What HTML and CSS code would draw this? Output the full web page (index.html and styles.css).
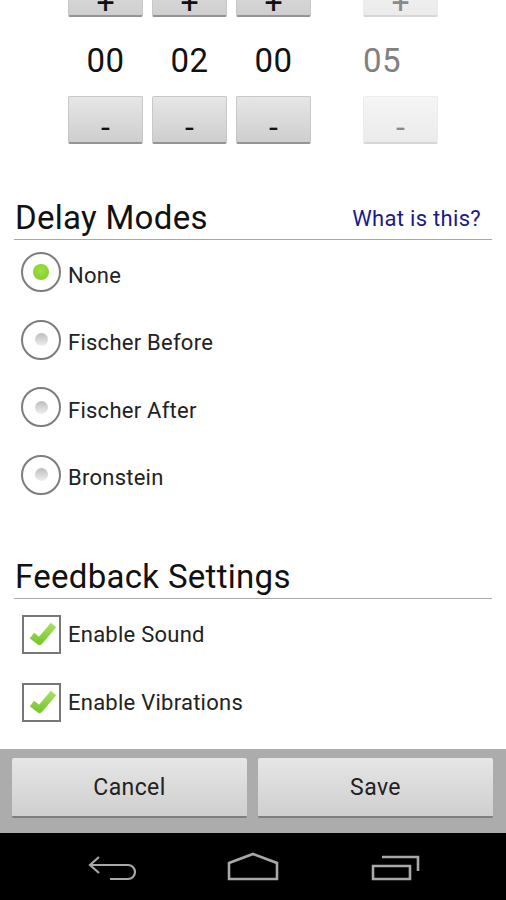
FILE: index.html
```html
<!DOCTYPE html>
<html>
<head>
    <meta charset="UTF-8">
    <title>Settings</title>
    <link rel="stylesheet" href="styles.css">
</head>
<body>
<div class="app">
    <div class="content">
        <div class="time-grid">
            <div class="time-col">
                <button type="button" class="step plus">+</button>
                <div class="digits">00</div>
                <button type="button" class="step minus">-</button>
            </div>
            <div class="time-col">
                <button type="button" class="step plus">+</button>
                <div class="digits">02</div>
                <button type="button" class="step minus">-</button>
            </div>
            <div class="time-col">
                <button type="button" class="step plus">+</button>
                <div class="digits">00</div>
                <button type="button" class="step minus">-</button>
            </div>
            <div class="time-col disabled">
                <button type="button" class="step plus">+</button>
                <div class="digits">05</div>
                <button type="button" class="step minus">-</button>
            </div>
        </div>

        <div class="section-head delay-head">
            <h2>Delay Modes</h2>
            <a class="help">What is this?</a>
        </div>
        <div class="options radios">
            <div class="option"><span class="radio checked"></span><span class="label">None</span></div>
            <div class="option"><span class="radio"></span><span class="label">Fischer Before</span></div>
            <div class="option"><span class="radio"></span><span class="label">Fischer After</span></div>
            <div class="option"><span class="radio"></span><span class="label">Bronstein</span></div>
        </div>

        <div class="section-head feedback-head">
            <h2>Feedback Settings</h2>
        </div>
        <div class="options checks">
            <div class="option">
                <span class="checkbox">
                    <svg viewBox="0 0 39 39" width="39" height="39">
                        <defs>
                            <linearGradient id="checkGreen" x1="0" y1="0" x2="0" y2="1">
                                <stop offset="0" stop-color="#a6dd62"/>
                                <stop offset="1" stop-color="#7cc932"/>
                            </linearGradient>
                        </defs>
                        <path d="M10 20.5 L17.5 26.5 L31.5 10" fill="none" stroke="url(#checkGreen)" stroke-width="7" stroke-linejoin="round"/>
                    </svg>
                </span>
                <span class="label">Enable Sound</span>
            </div>
            <div class="option">
                <span class="checkbox">
                    <svg viewBox="0 0 39 39" width="39" height="39">
                        <path d="M10 20.5 L17.5 26.5 L31.5 10" fill="none" stroke="url(#checkGreen)" stroke-width="7" stroke-linejoin="round"/>
                    </svg>
                </span>
                <span class="label">Enable Vibrations</span>
            </div>
        </div>
    </div>

    <div class="footer">
        <button type="button" class="footer-btn">Cancel</button>
        <button type="button" class="footer-btn">Save</button>
    </div>

    <div class="navbar">
        <svg viewBox="0 0 60 40" width="60" height="40"><path d="M17 11 L8 19 L17 27 M8 19 H46 A7 7 0 0 1 46 33 H28" fill="none" stroke="#a8a8a8" stroke-width="2.2"/></svg>
        <svg viewBox="0 0 60 40" width="60" height="40"><path d="M6 17 L30 8 L54 17 V33 H6 Z" fill="none" stroke="#a8a8a8" stroke-width="2.6"/></svg>
        <svg viewBox="0 0 60 40" width="60" height="40"><path d="M8 20 H45 V33 H8 Z M17 11 H53 V25" fill="none" stroke="#a8a8a8" stroke-width="2.6"/></svg>
    </div>
</div>
</body>
</html>
```

FILE: styles.css
```css
* {
    box-sizing: border-box;
}
html, body {
    margin: 0;
    padding: 0;
}
body {
    font-family: Roboto, "Liberation Sans", sans-serif;
    background-color: #fff;
    color: #111;
}
.app {
    width: 506px;
    height: 900px;
    display: flex;
    flex-direction: column;
    overflow: hidden;
}
.content {
    height: 749px;
    padding: 0 14px;
    overflow: hidden;
}

/* time pickers, the top of the list is scrolled off screen */
.time-grid {
    display: grid;
    grid-template-columns: repeat(3, 75px) 75px;
    column-gap: 9px;
    margin-top: -31px;
    padding-left: 54px;
}
.time-col:last-child {
    margin-left: 43px;
}
.step {
    display: block;
    width: 75px;
    height: 48px;
    padding: 0;
    border: 1px solid #c8c8c8;
    border-bottom: 2px solid #949494;
    border-radius: 2px;
    background: linear-gradient(#e6e6e6, #cecece);
    color: #111;
    font-family: Roboto, sans-serif;
    font-size: 32px;
    font-weight: 400;
    line-height: 1;
}
.step.plus {
    padding-top: 16px;
}
.step.minus {
    padding-top: 14px;
}
.digits {
    height: 79px;
    line-height: 88px;
    text-align: center;
    font-size: 33px;
    letter-spacing: 0.5px;
    color: #111;
}
.disabled .step {
    background: linear-gradient(#f5f5f5, #ebebeb);
    border-color: #ececec;
    border-bottom-color: #d6d6d6;
    color: #8a8a8a;
}
.disabled .digits {
    color: #808080;
}

.section-head {
    display: flex;
    justify-content: space-between;
    align-items: baseline;
    height: 44px;
    border-bottom: 1px solid #a8a8a8;
}
.section-head h2 {
    margin: 0 0 0 1px;
    font-size: 33px;
    font-weight: 400;
    letter-spacing: 0.3px;
    line-height: 43px;
    color: #111;
}
.delay-head {
    margin-top: 52px;
}
.feedback-head {
    margin-top: 60px;
}
.help {
    margin-right: 11px;
    font-size: 22px;
    letter-spacing: 0.3px;
    color: #1a1a8a;
    position: relative;
    top: -3px;
}

.options {
    display: flex;
    flex-direction: column;
    gap: 27.5px;
    padding-left: 8px;
}
.radios {
    margin-top: 12px;
}
.radios .label {
    margin-top: 6px;
}
.checks {
    margin-top: 16px;
    gap: 28px;
}
.option {
    display: flex;
    align-items: center;
    gap: 7px;
    height: 40px;
    font-size: 22px;
    letter-spacing: 0.25px;
    color: #222;
}
.radio {
    display: flex;
    align-items: center;
    justify-content: center;
    flex: none;
    width: 40px;
    height: 40px;
    margin-left: -1px;
    border: 2px solid #7d7d7d;
    border-radius: 50%;
}
.radio::after {
    content: "";
    width: 13px;
    height: 13px;
    border-radius: 50%;
    background: linear-gradient(#bdbdbd, #efefef);
}
.radio.checked::after {
    width: 16px;
    height: 16px;
    background: radial-gradient(circle at 50% 40%, #9ee13f, #7cc92c);
}
.checkbox {
    display: block;
    position: relative;
    flex: none;
    width: 39px;
    height: 39px;
    border: 2px solid #777;
}
.checkbox svg {
    position: absolute;
    left: -2px;
    top: -2px;
}

.footer {
    display: flex;
    gap: 11px;
    height: 84px;
    padding: 9px 13px 15px 12px;
    background-color: #acacac;
}
.footer-btn {
    flex: 1;
    border: none;
    border-bottom: 2px solid #7e7e7e;
    border-radius: 2px;
    background: linear-gradient(#e6e6e6, #cfcfcf);
    color: #222;
    font-family: Roboto, sans-serif;
    font-size: 23px;
    letter-spacing: 0.4px;
}
.navbar {
    display: grid;
    grid-template-columns: repeat(3, 141.5px);
    justify-content: center;
    justify-items: center;
    flex: 1;
    padding-top: 13px;
    background-color: #000;
}
```
